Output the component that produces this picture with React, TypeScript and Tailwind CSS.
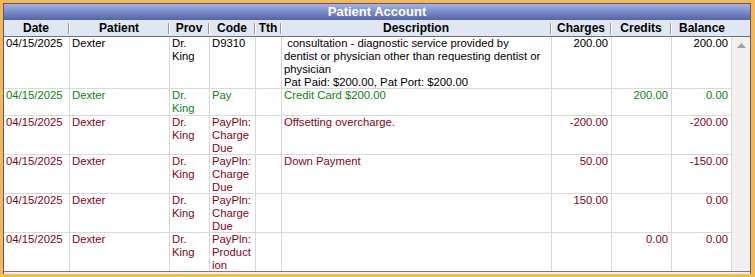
import React from "react";

type Row = {
  h: string;
  color: string;
  date: string;
  patient: string;
  prov: string[];
  code: string[];
  desc: string[];
  charges: string;
  credits: string;
  balance: string;
  last?: boolean;
};

const rows: Row[] = [
  {
    h: "h-[52px]",
    color: "text-[#000000]",
    date: "04/15/2025",
    patient: "Dexter",
    prov: ["Dr.", "King"],
    code: ["D9310"],
    desc: [
      " consultation - diagnostic service provided by",
      "dentist or physician other than requesting dentist or",
      "physician",
      "Pat Paid: $200.00, Pat Port: $200.00",
    ],
    charges: "200.00",
    credits: "",
    balance: "200.00",
  },
  {
    h: "h-[27px]",
    color: "text-[#0a870f]",
    date: "04/15/2025",
    patient: "Dexter",
    prov: ["Dr.", "King"],
    code: ["Pay"],
    desc: ["Credit Card $200.00"],
    charges: "",
    credits: "200.00",
    balance: "0.00",
  },
  {
    h: "h-[39px]",
    color: "text-[#850318]",
    date: "04/15/2025",
    patient: "Dexter",
    prov: ["Dr.", "King"],
    code: ["PayPln:", "Charge", "Due"],
    desc: ["Offsetting overcharge."],
    charges: "-200.00",
    credits: "",
    balance: "-200.00",
  },
  {
    h: "h-[39px]",
    color: "text-[#850318]",
    date: "04/15/2025",
    patient: "Dexter",
    prov: ["Dr.", "King"],
    code: ["PayPln:", "Charge", "Due"],
    desc: ["Down Payment"],
    charges: "50.00",
    credits: "",
    balance: "-150.00",
  },
  {
    h: "h-[39px]",
    color: "text-[#850318]",
    date: "04/15/2025",
    patient: "Dexter",
    prov: ["Dr.", "King"],
    code: ["PayPln:", "Charge", "Due"],
    desc: [""],
    charges: "150.00",
    credits: "",
    balance: "0.00",
  },
  {
    h: "h-[38px]",
    color: "text-[#850318]",
    date: "04/15/2025",
    patient: "Dexter",
    prov: ["Dr.", "King"],
    code: ["PayPln:", "Product", "ion"],
    desc: [""],
    charges: "",
    credits: "0.00",
    balance: "0.00",
    last: true,
  },
];

const headers: { label: string; w: string; sep: boolean }[] = [
  { label: "Date", w: "w-[66px]", sep: true },
  { label: "Patient", w: "w-[100px]", sep: true },
  { label: "Prov", w: "w-[40px]", sep: true },
  { label: "Code", w: "w-[46px]", sep: true },
  { label: "Tth", w: "w-[26px]", sep: true },
  { label: "Description", w: "w-[270px]", sep: true },
  { label: "Charges", w: "w-[60px]", sep: true },
  { label: "Credits", w: "w-[60px]", sep: true },
  { label: "Balance", w: "w-[60px]", sep: false },
];

function Lines({ lines }: { lines: string[] }) {
  return (
    <>
      {lines.map((l, i) => (
        <div key={i} className="whitespace-pre">
          {l}
        </div>
      ))}
    </>
  );
}

export default function App() {
  const cell = "border-r border-[#d9d9d9] overflow-hidden";
  return (
    <div
      className="w-[755px] h-[277px] bg-[#f8b84c] pt-[3px] pl-[3px] pr-[4px] pb-[3px]"
      style={{ fontFamily: '"Liberation Sans", Arial, sans-serif' }}
    >
      <div className="w-[748px] h-[271px] border-l border-r border-t border-[#4b5a9d] bg-[#f2f2f7] flex flex-col">
        {/* Title bar */}
        <div className="h-[16px] bg-gradient-to-b from-[#a7b3e4] to-[#5363a9] flex items-center justify-center text-white font-bold text-[13px] leading-[16px]">
          Patient Account
        </div>
        {/* Header */}
        <div className="h-[17px] bg-[#dfe8f2] border-b border-[#6f6f6f] flex text-[12px] font-bold text-black leading-[16px]">
          {headers.map((h) => (
            <div key={h.label} className={`${h.w} flex items-center`}>
              <span className="flex-1 text-center">{h.label}</span>
              {h.sep ? (
                <span className="w-[2px] h-[11px] border-l border-[#9a9a9a] border-r border-r-white" />
              ) : null}
            </div>
          ))}
        </div>
        {/* Body */}
        <div className="flex h-[235px] border-b border-[#7a7a7a]">
          <div className="w-[728px] flex flex-col text-[11.3px] leading-[13px]">
            {rows.map((r, idx) => (
              <div
                key={idx}
                className={`${r.h} ${r.color} grid grid-cols-[66px_100px_40px_46px_26px_270px_60px_60px_60px] bg-white ${
                  r.last ? "" : "border-b border-[#d9d9d9]"
                }`}
              >
                <div className={`${cell} pl-[2px]`}>{r.date}</div>
                <div className={`${cell} pl-[2px]`}>{r.patient}</div>
                <div className={`${cell} pl-[2px]`}>
                  <Lines lines={r.prov} />
                </div>
                <div className={`${cell} pl-[2px]`}>
                  <Lines lines={r.code} />
                </div>
                <div className={cell} />
                <div className={`${cell} pl-[2px]`}>
                  <Lines lines={r.desc} />
                </div>
                <div className={`${cell} text-right pr-[3px]`}>{r.charges}</div>
                <div className={`${cell} text-right pr-[3px]`}>{r.credits}</div>
                <div className={`${cell} text-right pr-[3px]`}>{r.balance}</div>
              </div>
            ))}
          </div>
          {/* Scrollbar */}
          <div className="w-[18px] bg-[#f0f0f0] flex justify-center pt-[6px]">
            <svg width="9" height="5" viewBox="0 0 9 5">
              <polygon points="4.5,0 9,5 0,5" fill="#a3a3a3" />
            </svg>
          </div>
        </div>
      </div>
    </div>
  );
}
